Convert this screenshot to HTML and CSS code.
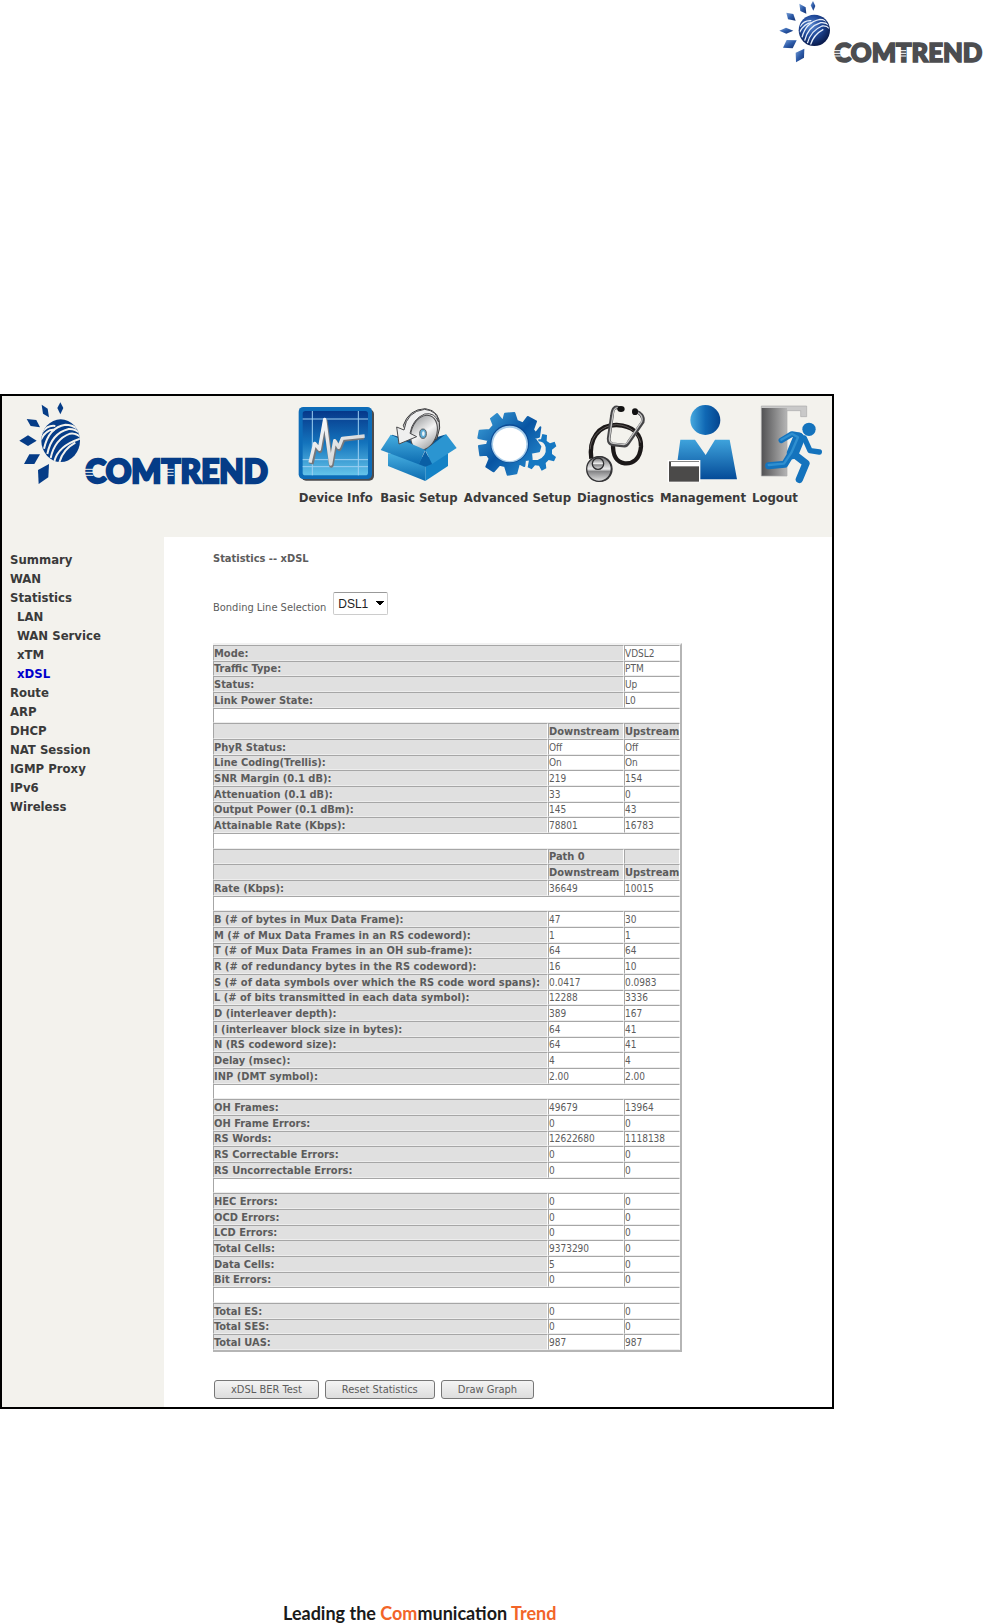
FILE: index.html
```
<!DOCTYPE html>
<html lang="en">

<head>
    <meta charset="UTF-8">
    <meta name="viewport" content="width=device-width, initial-scale=1.0">
    <title>Statistics -- xDSL</title>
    <link rel="stylesheet" href="styles.css">
</head>

<body>
    <header class="page-header">
        <svg class="page-logo" viewBox="24 0 624 210" role="img" aria-label="Comtrend">
            <defs>
                <linearGradient id="ray" x1="0" y1="0" x2="1" y2="1">
                    <stop offset="0" stop-color="#7da3d8"/>
                    <stop offset="0.5" stop-color="#2c5aa8"/>
                    <stop offset="1" stop-color="#14316f"/>
                </linearGradient>
                <radialGradient id="globe" cx="0.4" cy="0.35" r="0.65">
                    <stop offset="0" stop-color="#5b8ad0"/>
                    <stop offset="0.5" stop-color="#20499a"/>
                    <stop offset="1" stop-color="#0a1c4e"/>
                </radialGradient>
                <clipPath id="globe-clip"><circle cx="133" cy="91" r="44"/></clipPath>
            </defs>
            <g fill="url(#ray)">
                <path d="M129 3L136 18L130 32L122 16Z"/>
                <path d="M88 11L107 22L109 41L91 33Z"/>
                <path d="M49 38L70 42L77 62L54 58Z"/>
                <path d="M28 92L48 83L70 92L49 101Z"/>
                <path d="M50 120L80 121L68 145L39 143Z"/>
                <path d="M77 158L103 146L102 173L78 187Z"/>
            </g>
            <circle cx="133" cy="91" r="47" fill="url(#globe)"/>
            <g clip-path="url(#globe-clip)" fill="none" stroke="#e6eefa" stroke-width="4">
                <path d="M90 80Q102 60 124 62"/>
                <path d="M88 98Q102 70 126 68"/>
                <path d="M96 112Q108 66 150 58Q166 58 176 70"/>
                <path d="M104 122Q114 80 152 68Q170 66 182 80"/>
                <path d="M112 130Q122 92 156 78Q172 76 182 90"/>
                <path d="M121 136Q130 104 160 88"/>
            </g>
            <text class="wordmark wordmark-grey" x="193" y="185" font-size="77">COMTREND</text>
            <path d="M190 152H212M190 160H212M190 168H212M387 152H409M387 160H409M387 168H409" stroke="#fff" stroke-width="3"/>
        </svg>
    </header>

    <main class="frame">
        <div class="banner">
            <svg class="logo" viewBox="57 36 762 276" role="img" aria-label="Comtrend">
                <clipPath id="ball-clip"><ellipse cx="182" cy="152" rx="58" ry="64"/></clipPath>
                <g fill="#053c87">
                    <path d="M181 37L190 54L181 73L172 54Z"/>
                    <path d="M125 44L143 56L147 82L129 71Z"/>
                    <path d="M80 87L109 90L120 112L92 108Z"/>
                    <path d="M58 152L84 136L110 152L84 168Z"/>
                    <path d="M88 193L120 193L103 222L72 222Z"/>
                    <path d="M114 240L147 222L145 262L116 282Z"/>
                    <ellipse cx="182" cy="152" rx="58" ry="64"/>
                </g>
                <g clip-path="url(#ball-clip)" fill="none" stroke="#f3f2ed" stroke-width="6">
                    <path d="M124 130Q142 104 166 108"/>
                    <path d="M122 150Q140 116 164 120"/>
                    <path d="M132 176Q146 112 196 104Q216 104 232 116"/>
                    <path d="M142 192Q154 130 206 117Q226 116 240 130"/>
                    <path d="M152 204Q164 148 210 131Q230 128 244 144"/>
                    <path d="M163 214Q174 168 240 146"/>
                    <path d="M177 222Q186 180 226 158"/>
                </g>
                <text class="wordmark wordmark-blue" x="256" y="279" font-size="95">COMTREND</text>
                <path d="M250 238H280M250 247H280M250 256H280M495 238H521M495 247H521M495 256H521" stroke="#f3f2ed" stroke-width="3"/>
            </svg>

            <nav class="main-nav">
                <a href="#" class="nav-item">
                    <svg class="nav-icon" viewBox="24 24 228 240">
                        <defs>
                            <linearGradient id="screen" x1="0" y1="0" x2="0" y2="1">
                                <stop offset="0" stop-color="#06388a"/>
                                <stop offset="0.5" stop-color="#1474bd"/>
                                <stop offset="1" stop-color="#65c4ea"/>
                            </linearGradient>
                            <linearGradient id="wave" x1="0" y1="0" x2="1" y2="1">
                                <stop offset="0" stop-color="#ffffff"/>
                                <stop offset="1" stop-color="#c4c8cc"/>
                            </linearGradient>
                        </defs>
                        <rect x="34" y="40" width="218" height="214" rx="14" fill="#4b4b4d"/>
                        <rect x="26" y="33" width="220" height="216" rx="14" fill="#0d6cb8"/>
                        <rect x="38" y="45" width="196" height="193" rx="8" fill="url(#screen)"/>
                        <path d="M67 45V238M205 45V238M38 69H234M38 191H234M38 212H234" stroke="#9ed0f2" stroke-width="3"/>
                        <path d="M64 204L76 146L90 164L106 76L124 208L136 138L148 158L160 130L222 123" fill="none" stroke="#74777c" stroke-width="14" stroke-linejoin="round"/>
                        <path d="M60 200L74 142L88 160L104 70L122 204L134 134L146 154L157 127L224 120" fill="none" stroke="url(#wave)" stroke-width="10" stroke-linejoin="round"/>
                    </svg>
                    <span>Device Info</span>
                </a>
                <a href="#" class="nav-item">
                    <svg class="nav-icon" viewBox="270 24 234 240">
                        <defs>
                            <linearGradient id="box" x1="0" y1="0" x2="0" y2="1">
                                <stop offset="0" stop-color="#46aee0"/>
                                <stop offset="1" stop-color="#0c6bb0"/>
                            </linearGradient>
                            <linearGradient id="disc" x1="0" y1="0" x2="1" y2="1">
                                <stop offset="0" stop-color="#8d8f91"/>
                                <stop offset="0.5" stop-color="#f4f4f4"/>
                                <stop offset="1" stop-color="#8f9193"/>
                            </linearGradient>
                        </defs>
                        <path d="M306 116L386 140L464 116L472 122L406 166L298 126Z" fill="#08528f"/>
                        <path d="M340 88Q356 40 406 38Q452 44 449 96L440 130L356 130Z" fill="url(#disc)" stroke="#3a3a3c" stroke-width="3"/>
                        <ellipse cx="402" cy="110" rx="38" ry="54" transform="rotate(20 402 110)" fill="url(#disc)" stroke="#4a4a4c" stroke-width="3"/>
                        <ellipse cx="399" cy="113" rx="10" ry="14" fill="#5cabd6" stroke="#55585a" stroke-width="3"/>
                        <ellipse cx="400" cy="113" rx="4" ry="7" fill="#e8f3f9"/>
                        <path d="M294 172L406 184V255L294 210Z" fill="url(#box)"/>
                        <path d="M474 172L406 184V255L474 210Z" fill="#1482c6"/>
                        <path d="M302 116L406 162L386 205L272 162Z" fill="url(#box)"/>
                        <path d="M468 114L406 162L426 204L500 156Z" fill="#2b95d1"/>
                        <path d="M386 205L406 164L426 204L406 212Z" fill="#0a5fa5"/>
                        <path d="M404 40Q350 46 342 102L320 93L327 144L380 122L360 112Q368 68 404 54Q434 48 446 78Q442 44 404 40Z" fill="#efefef" stroke="#4a4a4c" stroke-width="3" stroke-linejoin="round"/>
                    </svg>
                    <span>Basic Setup</span>
                </a>
                <a href="#" class="nav-item">
                    <svg class="nav-icon" viewBox="558 24 240 240">
                        <defs>
                            <linearGradient id="gear" x1="0" y1="0" x2="1" y2="1">
                                <stop offset="0" stop-color="#3fa4dc"/>
                                <stop offset="0.5" stop-color="#0854a2"/>
                                <stop offset="1" stop-color="#2a93d6"/>
                            </linearGradient>
                        </defs>
                        <path d="M742 130L750 130L754 114L768 117L767 135L777 142L791 137L796 151L783 161L783 174L795 183L789 196L773 192L764 201L766 217L752 224L744 209L732 208L722 220L710 214L714 192L740 192Q768 182 764 154Q760 136 742 136Z" fill="#1678c2"/>
                        <path d="M636 76L642 53L670 51L678 75L696 82L710 63L735 76L726 101L734 112L748 94L744 122L730 126L748 152L744 166L720 170L722 190L702 192L700 210L684 202L676 232L650 236L642 210L626 206L608 226L586 212L596 188L588 176L568 178L564 150L588 146L592 132L562 126L566 104L596 102L608 88L600 68L618 54Z" fill="url(#gear)" stroke="url(#gear)" stroke-width="6" stroke-linejoin="round"/>
                        <circle cx="656" cy="143" r="58" fill="#0b4a94"/>
                        <circle cx="656" cy="144" r="55" fill="#a7cdea"/>
                        <circle cx="656" cy="145" r="50" fill="#fff"/>
                    </svg>
                    <span>Advanced Setup</span>
                </a>
                <a href="#" class="nav-item">
                    <svg class="nav-icon" viewBox="70 24 186 240">
                        <defs>
                            <linearGradient id="bell" x1="0" y1="0" x2="0" y2="1">
                                <stop offset="0" stop-color="#6c6c6e"/>
                                <stop offset="0.5" stop-color="#ececec"/>
                                <stop offset="0.6" stop-color="#858587"/>
                                <stop offset="1" stop-color="#e2e2e2"/>
                            </linearGradient>
                        </defs>
                        <path d="M92 188C84 130 112 86 168 87C220 90 242 116 241 152C238 190 216 204 192 202C164 198 156 176 157 142" fill="none" stroke="#1b1818" stroke-width="13"/>
                        <path d="M88 160C92 116 126 88 168 86C206 88 232 110 240 140" fill="none" stroke="#807b78" stroke-width="2"/>
                        <path d="M180 38C162 28 156 38 154 58L144 128Q144 142 156 145L192 149Q198 149 204 139L246 78C250 62 240 50 224 46" fill="none" stroke="#454547" stroke-width="11"/>
                        <path d="M172 35C160 34 158 46 156 60L146 128Q146 140 158 142L190 146Q196 146 202 137L243 77C247 64 240 54 230 49" fill="none" stroke="#c4c4c4" stroke-width="4"/>
                        <ellipse cx="181" cy="39" rx="11" ry="9" fill="#111"/>
                        <ellipse cx="223" cy="47" rx="9" ry="10" fill="#111"/>
                        <ellipse cx="118" cy="219" rx="38" ry="39" fill="#3c3c3e"/>
                        <ellipse cx="115" cy="219" rx="37" ry="37" fill="url(#bell)" stroke="#343436" stroke-width="4"/>
                        <circle cx="112" cy="203" r="17" fill="url(#bell)" stroke="#2c2c2e" stroke-width="4"/>
                    </svg>
                    <span>Diagnostics</span>
                </a>
                <a href="#" class="nav-item">
                    <svg class="nav-icon" viewBox="320 24 213 240">
                        <defs>
                            <linearGradient id="head" x1="0" y1="0" x2="1" y2="0">
                                <stop offset="0" stop-color="#46a9df"/>
                                <stop offset="0.5" stop-color="#1068b4"/>
                                <stop offset="1" stop-color="#04448e"/>
                            </linearGradient>
                            <linearGradient id="torso" x1="0" y1="0" x2="0" y2="1">
                                <stop offset="0" stop-color="#3fa3dc"/>
                                <stop offset="1" stop-color="#044b98"/>
                            </linearGradient>
                        </defs>
                        <circle cx="435" cy="72" r="45" fill="url(#head)"/>
                        <path d="M360 131H404L436 177L464 131H508L530 250H344Z" fill="url(#torso)"/>
                        <path d="M322 192H420V259H322Z" fill="#fff"/>
                        <path d="M326 196H416V257H326Z" fill="#4b4a49"/>
                        <path d="M332 198H416V211H332Z" fill="#fff"/>
                    </svg>
                    <span>Management</span>
                </a>
                <a href="#" class="nav-item nav-item-left">
                    <svg class="nav-icon" viewBox="600 24 189 240">
                        <defs>
                            <linearGradient id="door" x1="0" y1="0" x2="1" y2="0">
                                <stop offset="0" stop-color="#515153"/>
                                <stop offset="1" stop-color="#b5b5b5"/>
                            </linearGradient>
                        </defs>
                        <path d="M604 30H740V62H722V44H604Z" fill="#c9c9c9"/>
                        <path d="M604 36H681V240H604Z" fill="url(#door)"/>
                        <path d="M604 30H740V62H722V44H681V240H604Z" fill="none" stroke="#aaa" stroke-width="2"/>
                        <g fill="none" stroke="#1473bd" stroke-linecap="round" stroke-linejoin="round">
                            <path d="M664 133L696 114L718 118" stroke-width="17"/>
                            <path d="M716 128L698 172" stroke-width="36"/>
                            <path d="M733 126L750 164L778 168" stroke-width="16"/>
                            <path d="M694 172L674 205L626 209" stroke-width="21"/>
                            <path d="M704 176L738 202L718 250" stroke-width="22"/>
                        </g>
                        <circle cx="747" cy="100" r="20" fill="#1473bd"/>
                        <path d="M664 131L696 113L714 124L694 170L672 203L626 207" fill="none" stroke="#2f8fd0" stroke-width="7" stroke-linecap="round" stroke-linejoin="round"/>
                    </svg>
                    <span>Logout</span>
                </a>
            </nav>
        </div>

        <div class="body">
            <nav class="sidebar">
                <a href="#">Summary</a>
                <a href="#">WAN</a>
                <a href="#">Statistics</a>
                <a href="#" class="sub">LAN</a>
                <a href="#" class="sub">WAN Service</a>
                <a href="#" class="sub">xTM</a>
                <a href="#" class="sub active">xDSL</a>
                <a href="#">Route</a>
                <a href="#">ARP</a>
                <a href="#">DHCP</a>
                <a href="#">NAT Session</a>
                <a href="#">IGMP Proxy</a>
                <a href="#">IPv6</a>
                <a href="#">Wireless</a>
            </nav>

            <section class="content">
                <h1>Statistics -- xDSL</h1>

                <div class="line-select">
                    <label for="line">Bonding Line Selection</label>
                    <select id="line">
                        <option>DSL1</option>
                        <option>DSL2</option>
                    </select>
                </div>

                <table class="stats">
                    <colgroup>
                        <col class="col-name">
                        <col class="col-down">
                        <col class="col-up">
                    </colgroup>
                    <tbody>
                        <tr><th colspan="2">Mode:</th><td>VDSL2</td></tr>
                        <tr><th colspan="2">Traffic Type:</th><td>PTM</td></tr>
                        <tr><th colspan="2">Status:</th><td>Up</td></tr>
                        <tr><th colspan="2">Link Power State:</th><td>L0</td></tr>
                        <tr><td colspan="3"></td></tr>
                        <tr><th></th><th>Downstream</th><th>Upstream</th></tr>
                        <tr><th>PhyR Status:</th><td>Off</td><td>Off</td></tr>
                        <tr><th>Line Coding(Trellis):</th><td>On</td><td>On</td></tr>
                        <tr><th>SNR Margin (0.1 dB):</th><td>219</td><td>154</td></tr>
                        <tr><th>Attenuation (0.1 dB):</th><td>33</td><td>0</td></tr>
                        <tr><th>Output Power (0.1 dBm):</th><td>145</td><td>43</td></tr>
                        <tr><th>Attainable Rate (Kbps):</th><td>78801</td><td>16783</td></tr>
                        <tr><td colspan="3"></td></tr>
                        <tr><th></th><th>Path 0</th><th></th></tr>
                        <tr><th></th><th>Downstream</th><th>Upstream</th></tr>
                        <tr><th>Rate (Kbps):</th><td>36649</td><td>10015</td></tr>
                        <tr><td colspan="3"></td></tr>
                        <tr><th>B (# of bytes in Mux Data Frame):</th><td>47</td><td>30</td></tr>
                        <tr><th>M (# of Mux Data Frames in an RS codeword):</th><td>1</td><td>1</td></tr>
                        <tr><th>T (# of Mux Data Frames in an OH sub-frame):</th><td>64</td><td>64</td></tr>
                        <tr><th>R (# of redundancy bytes in the RS codeword):</th><td>16</td><td>10</td></tr>
                        <tr><th>S (# of data symbols over which the RS code word spans):</th><td>0.0417</td><td>0.0983</td></tr>
                        <tr><th>L (# of bits transmitted in each data symbol):</th><td>12288</td><td>3336</td></tr>
                        <tr><th>D (interleaver depth):</th><td>389</td><td>167</td></tr>
                        <tr><th>I (interleaver block size in bytes):</th><td>64</td><td>41</td></tr>
                        <tr><th>N (RS codeword size):</th><td>64</td><td>41</td></tr>
                        <tr><th>Delay (msec):</th><td>4</td><td>4</td></tr>
                        <tr><th>INP (DMT symbol):</th><td>2.00</td><td>2.00</td></tr>
                        <tr><td colspan="3"></td></tr>
                        <tr><th>OH Frames:</th><td>49679</td><td>13964</td></tr>
                        <tr><th>OH Frame Errors:</th><td>0</td><td>0</td></tr>
                        <tr><th>RS Words:</th><td>12622680</td><td>1118138</td></tr>
                        <tr><th>RS Correctable Errors:</th><td>0</td><td>0</td></tr>
                        <tr><th>RS Uncorrectable Errors:</th><td>0</td><td>0</td></tr>
                        <tr><td colspan="3"></td></tr>
                        <tr><th>HEC Errors:</th><td>0</td><td>0</td></tr>
                        <tr><th>OCD Errors:</th><td>0</td><td>0</td></tr>
                        <tr><th>LCD Errors:</th><td>0</td><td>0</td></tr>
                        <tr><th>Total Cells:</th><td>9373290</td><td>0</td></tr>
                        <tr><th>Data Cells:</th><td>5</td><td>0</td></tr>
                        <tr><th>Bit Errors:</th><td>0</td><td>0</td></tr>
                        <tr><td colspan="3"></td></tr>
                        <tr><th>Total ES:</th><td>0</td><td>0</td></tr>
                        <tr><th>Total SES:</th><td>0</td><td>0</td></tr>
                        <tr><th>Total UAS:</th><td>987</td><td>987</td></tr>
                    </tbody>
                </table>

                <div class="buttons">
                    <button type="button">xDSL BER Test</button>
                    <button type="button">Reset Statistics</button>
                    <button type="button">Draw Graph</button>
                </div>
            </section>
        </div>
    </main>

    <footer class="page-footer">Leading the <span>Com</span>munication <span>Trend</span></footer>
</body>

</html>
```
FILE: styles.css
```
* {
    box-sizing: border-box;
}

body {
    margin: 0;
    background-color: #fff;
    color: #3a3a3a;
    font-family: "DejaVu Sans Condensed", "DejaVu Sans", sans-serif;
    font-size: 11px;
}

a {
    color: inherit;
    text-decoration: none;
}

.page-header {
    display: flex;
    justify-content: flex-end;
    padding-bottom: 324px;
}

.page-logo {
    width: 208px;
    height: 70px;
    overflow: visible;
}

.wordmark {
    font-family: Lato, sans-serif;
    font-weight: 900;
}

.wordmark-grey {
    fill: #4c4d50;
    stroke: #4c4d50;
    stroke-width: 5px;
}

.wordmark-blue {
    fill: #053c87;
    stroke: #053c87;
    stroke-width: 7px;
}

/* Router admin window */
.frame {
    margin-right: 152px;
    border: 2px solid #000;
}

.banner {
    display: flex;
    justify-content: space-between;
    align-items: flex-start;
    height: 141px;
    padding: 6px 9px 0 17px;
    background-color: #f3f2ed;
}

.logo {
    width: 254px;
    height: 92px;
    overflow: visible;
}

.main-nav {
    display: flex;
    gap: 6px;
}

.nav-item {
    display: flex;
    flex-direction: column;
    align-items: center;
    font-size: 13px;
    font-weight: bold;
    line-height: 16px;
    white-space: nowrap;
}

.nav-item-left {
    align-items: flex-start;
}

.nav-item-left .nav-icon {
    margin-left: 8px;
}

.nav-icon {
    height: 80px;
    margin: 2px 0 6px;
}

.body {
    display: flex;
}

.sidebar {
    flex: 0 0 162px;
    display: flex;
    flex-direction: column;
    padding: 13px 8px;
    background-color: #f3f2ed;
    font-size: 13px;
    font-weight: bold;
    line-height: 19px;
}

.sidebar .sub {
    padding-left: 7px;
}

.sidebar .active {
    color: #0000cc;
}

.content {
    flex: 1;
    padding: 15px 0 8px 49px;
    color: #5c5c5c;
}

h1 {
    margin: 0 0 26px;
    font-size: 11px;
    line-height: 14px;
}

.line-select {
    display: flex;
    align-items: flex-end;
    gap: 7px;
    margin-bottom: 28px;
    line-height: 14px;
}

select {
    width: 55px;
    height: 23px;
    padding: 0 4px;
    border: 1px solid #ccc;
    border-top-color: #999;
    border-radius: 2px;
    appearance: none;
    /* two triangles that make the black down arrow */
    background:
        linear-gradient(to bottom right, #000 50%, transparent 50%) no-repeat right 3px center / 4px 5px,
        linear-gradient(to bottom left, #000 50%, transparent 50%) no-repeat right 7px center / 4px 5px,
        #fff;
    color: #222;
    font-family: "Liberation Sans", Arial, sans-serif;
    font-size: 12px;
}

.stats {
    width: 469px;
    table-layout: fixed;
    border-collapse: separate;
    border-spacing: 0;
    border: 2px solid #b5b5b5;
    border-top-color: #f2f2f2;
    border-left: 0;
}

.col-down {
    width: 76px;
}

.col-up {
    width: 56px;
}

.stats tr {
    height: 16px;
}

.stats tr:nth-child(3n+2) {
    height: 15px;
}

.stats th,
.stats td {
    padding: 0;
    border: 1px solid #a6a6a6;
    border-right-color: #fff;
    border-bottom-color: #ededed;
    line-height: 13px;
    text-align: left;
    white-space: nowrap;
}

.stats td {
    font-size: 10px;
}

.stats th {
    background-color: #e0e0e0;
}

.buttons {
    display: flex;
    gap: 6px;
    margin-top: 28px;
    padding-left: 1px;
}

button {
    height: 19px;
    padding: 0 16px;
    border: 1px solid #777;
    border-radius: 3px;
    background: linear-gradient(#f4f4f4, #ddd);
    color: #5c5c5c;
    font-family: inherit;
    font-size: 11px;
    line-height: 16px;
}

.page-footer {
    padding: 193px 0 0 283px;
    color: #1a1a1a;
    font-family: Lato, sans-serif;
    font-size: 18px;
    font-weight: bold;
    line-height: 23px;
}

.page-footer span {
    color: #f26529;
}
```
